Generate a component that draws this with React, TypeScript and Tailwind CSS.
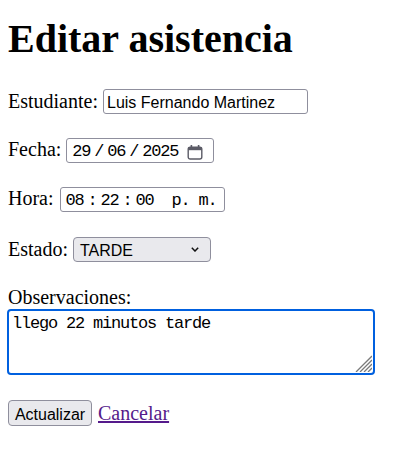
const serif = "font-['Liberation_Serif','Times_New_Roman',serif]";
const sans = "font-['Liberation_Sans',Arial,sans-serif]";
const mono = "font-['Liberation_Mono','Courier_New',monospace]";

function CalendarIcon() {
  return (
    <svg width="16" height="15" viewBox="0 0 16 15" className="ml-[9px] self-center">
      <rect x="1.2" y="2.2" width="13.6" height="11.8" rx="2" fill="none" stroke="#5b5b66" strokeWidth="1.4" />
      <rect x="1.2" y="2.2" width="13.6" height="3" fill="#5b5b66" />
      <rect x="3.6" y="0" width="1.6" height="3" fill="#5b5b66" />
      <rect x="10.8" y="0" width="1.6" height="3" fill="#5b5b66" />
    </svg>
  );
}

function ResizeGrip() {
  return (
    <svg width="18" height="18" viewBox="0 0 18 18" className="absolute bottom-[1px] right-[1px]">
      <g stroke="#7a7a7a" strokeWidth="1.3">
        <line x1="18" y1="2" x2="2" y2="18" />
        <line x1="18" y1="6" x2="6" y2="18" />
        <line x1="18" y1="10" x2="10" y2="18" />
        <line x1="18" y1="14" x2="14" y2="18" />
      </g>
    </svg>
  );
}

export default function App() {
  return (
    <main className={`min-h-screen bg-white px-[8px] pt-[16px] text-black ${serif}`}>
      <h1 className="text-[40px] font-bold leading-[46px]">Editar asistencia</h1>

      <form className="flex flex-col text-[20px] leading-[23px]">
        <div className="mt-[27px] flex items-baseline">
          <span>Estudiante:</span>
          <div
            className={`ml-[5px] flex h-[25px] w-[205px] rounded-[3px] border border-[#8f8f9d] pl-[3px] pt-[4px] text-[16px] leading-[18px] ${sans}`}
          >
            <span>Luis Fernando Martinez</span>
          </div>
        </div>

        <div className="mt-[24px] flex items-baseline">
          <span>Fecha:</span>
          <div
            className={`ml-[5px] flex h-[25px] w-[148px] items-start rounded-[3px] border border-[#8f8f9d] pl-[5px] pt-[4px] text-[17px] leading-[18px] tracking-[-1.2px] ${mono}`}
          >
            <span>29</span>
            <span className="w-[17px] text-center">/</span>
            <span>06</span>
            <span className="w-[17px] text-center">/</span>
            <span>2025</span>
            <CalendarIcon />
          </div>
        </div>

        <div className="mt-[24px] flex items-baseline">
          <span>Hora:</span>
          <div
            className={`ml-[6px] flex h-[25px] w-[165px] items-start rounded-[3px] border border-[#8f8f9d] pl-[5px] pt-[4px] text-[17px] leading-[18px] tracking-[-1.2px] ${mono}`}
          >
            <span>08</span>
            <span className="w-[17px] text-center">:</span>
            <span>22</span>
            <span className="w-[17px] text-center">:</span>
            <span>00</span>
            <span className="ml-[18px]">p. m.</span>
          </div>
        </div>

        <div className="mt-[25px] flex items-baseline">
          <span>Estado:</span>
          <div
            className={`ml-[5px] flex h-[25px] w-[138px] items-start rounded-[4px] border border-[#8f8f9d] bg-[#e9e9ed] pl-[6px] pt-[4px] text-[16px] leading-[18px] ${sans}`}
          >
            <span>TARDE</span>
            <svg width="8" height="5" viewBox="0 0 8 5" className="ml-auto mr-[11px] mt-[5px]">
              <polyline points="0.8,0.8 4,4 7.2,0.8" fill="none" stroke="#111" strokeWidth="1.5" />
            </svg>
          </div>
        </div>

        <span className="mt-[24px]">Observaciones:</span>
        <div
          className={`relative -ml-px h-[66px] w-[368px] rounded-[4px] border-2 border-[#0060df] pl-[3px] pt-[4px] text-[17px] leading-[18px] tracking-[-1.2px] ${mono}`}
        >
          llego 22 minutos tarde
          <ResizeGrip />
        </div>

        <div className="mt-[25px] flex items-baseline">
          <div
            className={`flex h-[26px] w-[84px] justify-center rounded-[4px] border border-[#8f8f9d] bg-[#e9e9ed] pt-[5px] text-[16px] leading-[18px] ${sans}`}
          >
            Actualizar
          </div>
          <a href="#" className="ml-[6px] text-[#551a8b] underline">
            Cancelar
          </a>
        </div>
      </form>
    </main>
  );
}
